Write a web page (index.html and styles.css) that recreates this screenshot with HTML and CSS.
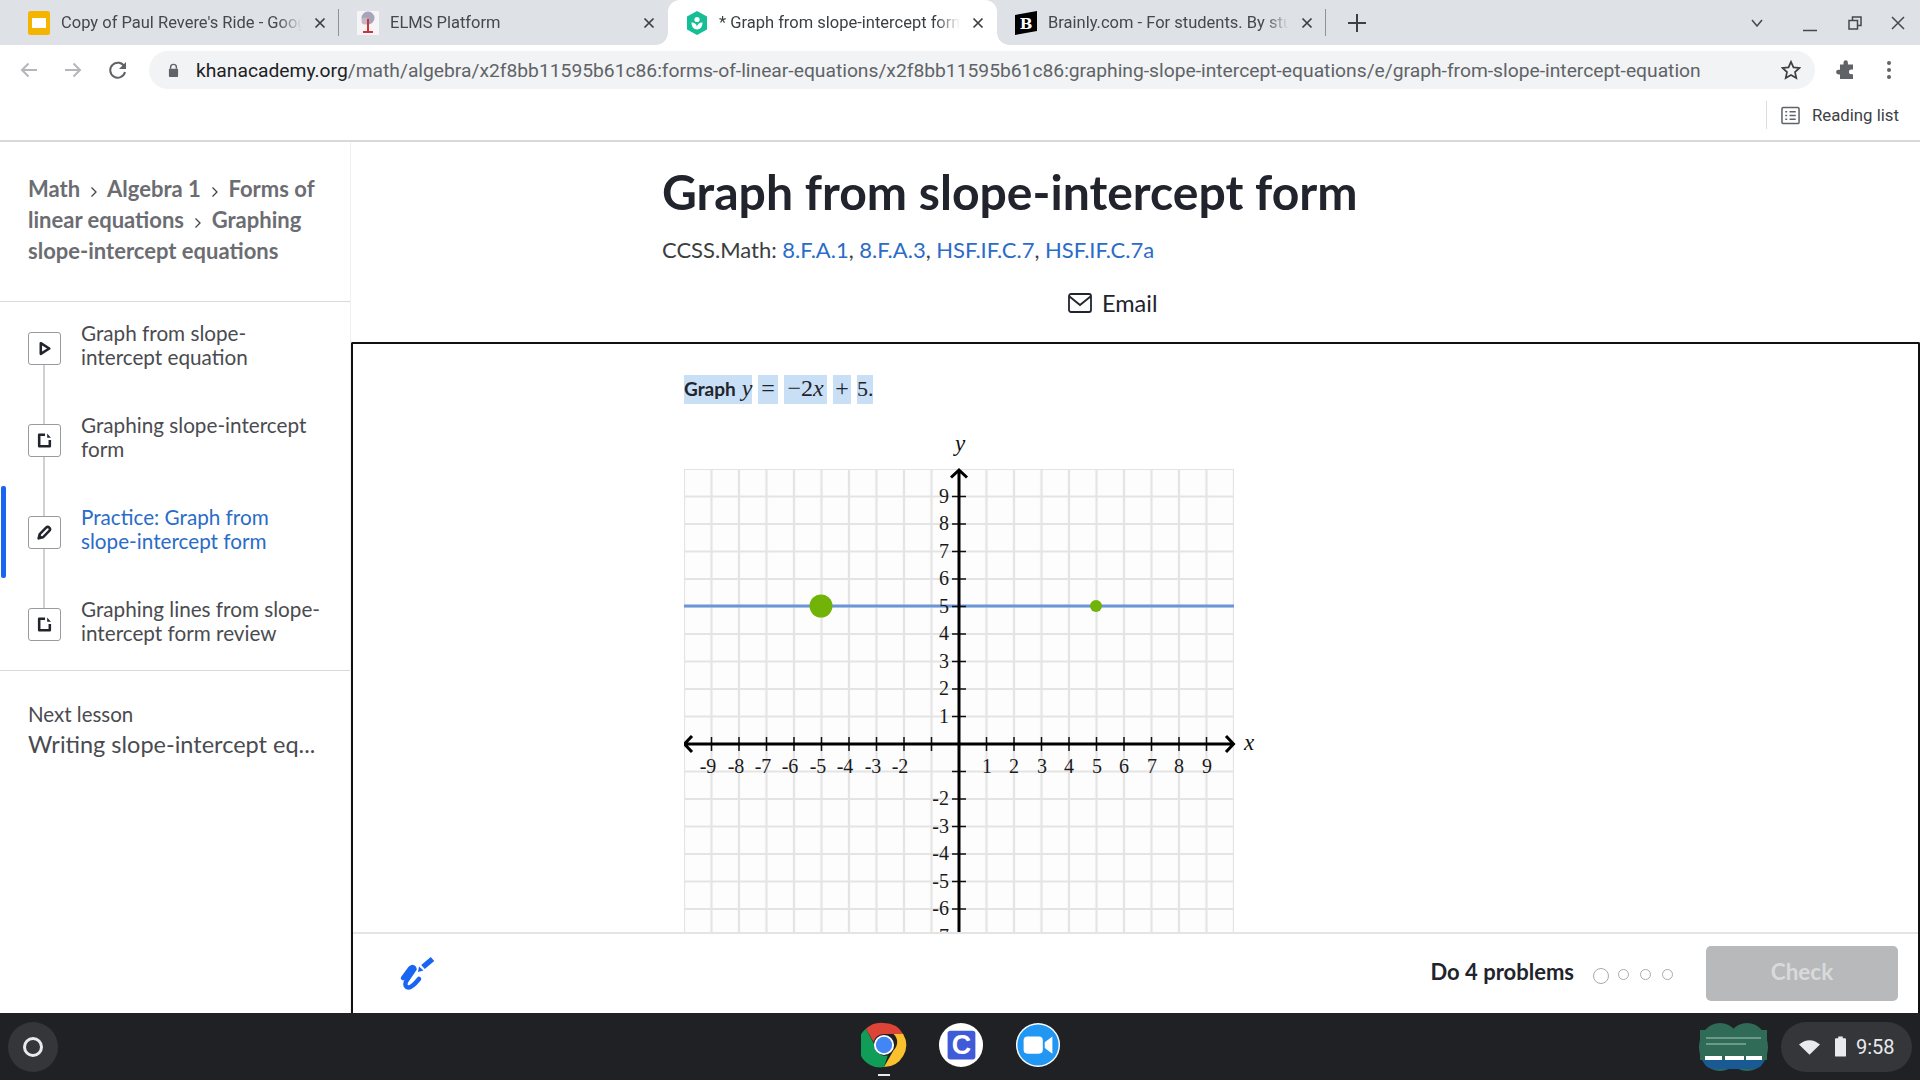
FILE: index.html
```html
<!DOCTYPE html>
<html lang="en">

<head>
	<meta charset="UTF-8">
	<title>Graph from slope-intercept form</title>
	<link rel="stylesheet" href="styles.css">
</head>

<body>
	<div class="window">

		<!-- browser tabs -->
		<div class="tabstrip">
			<div class="tab tab-sep">
				<svg class="favicon" viewBox="0 0 22 24"><rect x="0" y="0" width="22" height="24" rx="2.5" fill="#f4b400" /><rect x="4" y="7" width="14" height="10" fill="#fff" /></svg>
				<span class="tab-title">Copy of Paul Revere's Ride - Goog</span>
				<svg class="tab-close" viewBox="0 0 12 12"><path d="M1.5 1.5l9 9M10.5 1.5l-9 9" /></svg>
			</div>
			<div class="tab">
				<svg class="favicon" viewBox="0 0 22 24"><rect width="22" height="24" fill="#f6f4f6" /><circle cx="11" cy="7" r="6.500" fill="#a9a4bb" /><circle cx="8" cy="10" r="3.500" fill="#c3b9c4" /><path d="M11 8v12M6 21h10" stroke="#c9363a" stroke-width="2" /></svg>
				<span class="tab-title">ELMS Platform</span>
				<svg class="tab-close" viewBox="0 0 12 12"><path d="M1.5 1.5l9 9M10.5 1.5l-9 9" /></svg>
			</div>
			<div class="tab tab-active">
				<svg class="favicon" viewBox="0 0 22 24"><path d="M11 0l10 5.5v13L11 24 1 18.500v-13z" fill="#14bf96" /><circle cx="11" cy="8.500" r="2.600" fill="#fff" /><path d="M5.500 11.500c3 0 5.500 1.500 5.500 5 0-3.500 2.500-5 5.500-5 0 4-2 7-5.500 7s-5.500-3-5.500-7z" fill="#fff" /></svg>
				<span class="tab-title">* Graph from slope-intercept form</span>
				<svg class="tab-close" viewBox="0 0 12 12"><path d="M1.5 1.5l9 9M10.5 1.5l-9 9" /></svg>
			</div>
			<div class="tab tab-sep">
				<svg class="favicon" viewBox="0 0 22 24"><path d="M0 4L22 0v20L0 24z" fill="#000" /><text class="brainly-b" x="11" y="17.500" text-anchor="middle">B</text></svg>
				<span class="tab-title">Brainly.com - For students. By stu</span>
				<svg class="tab-close" viewBox="0 0 12 12"><path d="M1.5 1.5l9 9M10.5 1.5l-9 9" /></svg>
			</div>
			<svg class="new-tab" viewBox="0 0 18 18"><path d="M9 0v18M0 9h18" /></svg>
			<div class="window-btns">
				<svg viewBox="0 0 12 8" class="win-caret"><path d="M1 1l5 6 5-6" /></svg>
				<svg viewBox="0 0 14 14" class="win-min"><path d="M0 12.500h14" /></svg>
				<svg viewBox="0 0 14 14" class="win-max"><path d="M1 4.500h8.500V13H1zM4.500 4.500V1H13v8.500H9.500" /></svg>
				<svg viewBox="0 0 14 14" class="win-close"><path d="M1 1l12 12M13 1L1 13" /></svg>
			</div>
		</div>

		<!-- address bar -->
		<div class="toolbar">
			<svg class="nav-icon nav-back" viewBox="0 0 20 20"><path d="M18 10H3M9.500 3.500L3 10l6.500 6.500" /></svg>
			<svg class="nav-icon nav-forward" viewBox="0 0 20 20"><path d="M2 10h15M10.500 3.500L17 10l-6.500 6.500" /></svg>
			<svg class="nav-icon nav-reload" viewBox="0 0 20 20"><path d="M16.500 7A7.500 7.500 0 1 0 17 12" /><path class="solid" d="M18 2v7h-7z" /></svg>
			<div class="omnibox">
				<svg class="lock" viewBox="0 0 12 16"><path class="shackle" d="M2.800 6V4.500a3.200 3.200 0 0 1 6.400 0V6" /><rect x="1" y="6" width="10" height="9" rx="1" /></svg>
				<span class="url"><b>khanacademy.org</b>/math/algebra/x2f8bb11595b61c86:forms-of-linear-equations/x2f8bb11595b61c86:graphing-slope-intercept-equations/e/graph-from-slope-intercept-equation</span>
				<svg class="star" viewBox="0 0 20 20"><path d="M10 1.800l2.500 5.600 6 .6-4.500 4.100 1.300 6L10 15l-5.300 3.100 1.300-6L1.500 8l6-.6z" /></svg>
			</div>
			<svg class="puzzle" viewBox="0 0 20 20"><path d="M7.500 2.500a2.200 2.200 0 0 1 4.400 0V4.500H17v5h-1.700a2.400 2.400 0 0 0 0 4.800H17V19H4v-4.500H2.500a2.400 2.400 0 0 1 0-4.800H4V4.500h3.500z" /></svg>
			<svg class="dots" viewBox="0 0 4 18"><circle cx="2" cy="2" r="2" /><circle cx="2" cy="9" r="2" /><circle cx="2" cy="16" r="2" /></svg>
		</div>

		<div class="bookmarks">
			<div class="reading-list">
				<svg viewBox="0 0 20 20"><rect x="1" y="1.500" width="18" height="17" rx="1.500" /><path d="M4.500 6h2M4.500 10h2M4.500 14h2M9 6h6.500M9 10h6.500M9 14h6.500" /></svg>
				<span>Reading list</span>
			</div>
		</div>

		<!-- khan academy page -->
		<div class="page">
			<aside class="sidebar">
				<div class="crumbs">
					<a>Math</a> <svg class="crumb-arrow" viewBox="0 0 8 12"><path d="M1.500 1.500L6 6l-4.500 4.500" /></svg> <a>Algebra 1</a> <svg class="crumb-arrow" viewBox="0 0 8 12"><path d="M1.500 1.500L6 6l-4.500 4.500" /></svg> <a>Forms of</a> <a>linear equations</a> <svg class="crumb-arrow" viewBox="0 0 8 12"><path d="M1.500 1.500L6 6l-4.500 4.500" /></svg> <a>Graphing</a> <a>slope-intercept equations</a>
				</div>

				<ul class="lesson-list">
					<li class="lesson">
						<span class="lesson-icon"><svg viewBox="0 0 16 16"><path class="solid-line" d="M4.500 3l8 5-8 5z" /></svg></span>
						<span class="lesson-name">Graph from slope-<br>intercept equation</span>
					</li>
					<li class="lesson">
						<span class="lesson-icon"><svg viewBox="0 0 16 16"><path d="M8.500 2.500H3v11h10V7.500" /><path class="notch" d="M10.500 1.500l3.500 4h-3.500z" /></svg></span>
						<span class="lesson-name">Graphing slope-intercept<br>form</span>
					</li>
					<li class="lesson lesson-current">
						<span class="lesson-icon"><svg viewBox="0 0 16 16"><path d="M2.500 13.500l1-4L9.500 3.500a2 2 0 0 1 3 3L6.500 12.500z" /><path class="notch" d="M2 14l1-4.500 3.500 3.500z" /></svg></span>
						<span class="lesson-name">Practice: Graph from<br>slope-intercept form</span>
					</li>
					<li class="lesson">
						<span class="lesson-icon"><svg viewBox="0 0 16 16"><path d="M8.500 2.500H3v11h10V7.500" /><path class="notch" d="M10.500 1.500l3.500 4h-3.500z" /></svg></span>
						<span class="lesson-name">Graphing lines from slope-<br>intercept form review</span>
					</li>
				</ul>

				<div class="next-lesson">
					<div class="next-label">Next lesson</div>
					<div class="next-name">Writing slope-intercept eq...</div>
				</div>
			</aside>

			<main class="content">
				<header class="content-head">
					<h1>Graph from slope-intercept form</h1>
					<p class="ccss">CCSS.Math: <a>8.F.A.1</a>, <a>8.F.A.3</a>, <a>HSF.IF.C.7</a>, <a>HSF.IF.C.7a</a></p>
					<div class="email">
						<svg viewBox="0 0 24 20"><rect x="1" y="1" width="22" height="18" rx="2" /><path d="M1.500 3.500L12 12l10.500-8.500" /></svg>
						<span>Email</span>
					</div>
				</header>

				<section class="exercise">
					<div class="problem">
						<div class="prompt">
							<span class="sel sel-word"><b>Graph</b> <i>y</i></span>
							<span class="sel sel-eq">=</span>
							<span class="sel sel-num">−2<i>x</i></span>
							<span class="sel sel-plus">+</span>
							<span class="sel sel-five">5.</span>
						</div>
						<svg class="graph" width="590" height="600" viewBox="0 0 590 600">
							<defs>
								<pattern id="grid" x="-13.75" y="25.25" width="27.5" height="27.5" patternUnits="userSpaceOnUse">
									<rect width="27.5" height="27.5" fill="#fdfdfd" />
									<path d="M13.750 0V27.500M0 13.750H27.500" fill="none" stroke="#e4e4e4" stroke-width="2.200" />
								</pattern>
							</defs>
							<rect x="0" y="39" width="550" height="550" fill="url(#grid)" />
							<path class="line" d="M0 176H550" />
							<path class="ticks" d="M27.500 307v14M55 307v14M82.500 307v14M110 307v14M137.500 307v14M165 307v14M192.500 307v14M220 307v14M247.500 307v14M302.500 307v14M330 307v14M357.500 307v14M385 307v14M412.500 307v14M440 307v14M467.500 307v14M495 307v14M522.500 307v14M268 66.500h14M268 94h14M268 121.500h14M268 149h14M268 176.500h14M268 204h14M268 231.500h14M268 259h14M268 286.500h14M268 341.500h14M268 369h14M268 396.500h14M268 424h14M268 451.500h14M268 479h14M268 506.500h14" />
							<path class="axis" d="M275 40V600M1 314H549M8 306L0.500 314L8 322M542 306L549.500 314L542 322M267 47.500L275 40L283 47.500" />
							<circle cx="137" cy="176" r="11.500" fill="#71b307" />
							<circle cx="412" cy="176" r="6" fill="#71b307" />
							<g class="tick-labels" text-anchor="middle">
								<text x="24" y="343">-9</text><text x="52" y="343">-8</text><text x="79" y="343">-7</text><text x="106" y="343">-6</text><text x="134" y="343">-5</text><text x="161" y="343">-4</text><text x="189" y="343">-3</text><text x="216" y="343">-2</text>
								<text x="303" y="343">1</text><text x="330" y="343">2</text><text x="358" y="343">3</text><text x="385" y="343">4</text><text x="413" y="343">5</text><text x="440" y="343">6</text><text x="468" y="343">7</text><text x="495" y="343">8</text><text x="523" y="343">9</text>
							</g>
							<g class="tick-labels" text-anchor="end">
								<text x="265" y="73">9</text><text x="265" y="100">8</text><text x="265" y="128">7</text><text x="265" y="155">6</text><text x="265" y="183">5</text><text x="265" y="210">4</text><text x="265" y="238">3</text><text x="265" y="265">2</text><text x="265" y="293">1</text>
								<text x="265" y="375">-2</text><text x="265" y="403">-3</text><text x="265" y="430">-4</text><text x="265" y="458">-5</text><text x="265" y="485">-6</text><text x="265" y="513">-7</text>
							</g>
							<text class="axis-label" x="560" y="320">x</text>
							<text class="axis-label" x="271" y="21">y</text>
						</svg>
					</div>

					<footer class="exercise-foot">
						<svg class="scratch" viewBox="0 0 36 36"><path class="scribble" d="M4 22L11 12.500Q14.500 9.500 15.500 13L7 25.500Q5 31 9.500 31.500Q13 31.500 20 23" /><path class="pencil" d="M24 11L33.500 3" /><path class="pencil-tip" d="M19 16l1-5.500 4.500 4z" /></svg>
						<span class="goal">Do 4 problems</span>
						<div class="dots-progress">
							<span class="dot dot-first"></span><span class="dot"></span><span class="dot"></span><span class="dot"></span>
						</div>
						<button class="check" disabled>Check</button>
					</footer>
				</section>
			</main>
		</div>

		<!-- chrome os shelf -->
		<div class="shelf">
			<div class="launcher"><span class="launcher-ring"></span></div>
			<div class="shelf-apps">
				<div class="shelf-app app-active">
					<svg viewBox="0 0 48 48">
						<path d="M24 1a23 23 0 0 1 20 11.500H24a11.500 11.500 0 0 0-11 8L5 7A23 23 0 0 1 24 1z" fill="#db4437" />
						<path d="M44 12.500A23 23 0 0 1 24 47l10-17.500a11.500 11.500 0 0 0 0-17z" fill="#fbc02d" />
						<path d="M24 47A23 23 0 0 1 5 7l9 16.500a11.500 11.500 0 0 0 14 11.500L24 47z" fill="#0f9d58" />
						<circle cx="24" cy="24" r="10.500" fill="#fff" /><circle cx="24" cy="24" r="8.500" fill="#4285f4" />
					</svg>
				</div>
				<div class="shelf-app">
					<svg viewBox="0 0 48 48"><circle cx="24" cy="24" r="23" fill="#fff" /><rect x="10" y="9" width="29" height="30" rx="3" fill="#3f5bd8" /><text class="clever-c" x="24.500" y="33" text-anchor="middle">C</text></svg>
				</div>
				<div class="shelf-app">
					<svg viewBox="0 0 48 48"><circle cx="24" cy="24" r="23" fill="#fff" /><circle cx="24" cy="24" r="21.500" fill="#2196f3" /><rect x="9" y="15" width="20" height="18" rx="4" fill="#fff" /><path d="M31 21l8-6v18l-8-6z" fill="#fff" /></svg>
				</div>
			</div>
			<div class="shelf-tray">
				<svg class="holding" viewBox="0 0 71 50">
					<ellipse cx="22" cy="25" rx="21" ry="24" fill="#2f6b57" />
					<ellipse cx="49" cy="25" rx="21" ry="24" fill="#2f6b57" />
					<rect x="2" y="8" width="67" height="30" fill="#2f6b57" />
					<path d="M4 38h63l-4 6Q58 48 49 47H22Q13 48 8 44z" fill="#1a5a94" />
					<path d="M8 16h55M8 22h40" stroke="#a9c7ba" stroke-width="1" />
					<rect x="7" y="34" width="17" height="4" fill="#fff" /><rect x="27" y="34" width="19" height="4" fill="#fff" /><rect x="48" y="34" width="16" height="4" fill="#fff" />
				</svg>
				<div class="status">
					<svg class="wifi" viewBox="0 0 22 16"><path d="M0 5.500Q11-3.500 22 5.500L11 16z" /></svg>
					<svg class="battery" viewBox="0 0 12 22"><path d="M3.500 0h5v2H11a1 1 0 0 1 1 1v18a1 1 0 0 1-1 1H1a1 1 0 0 1-1-1V3a1 1 0 0 1 1-1h2.500z" /></svg>
					<span class="clock">9:58</span>
				</div>
			</div>
		</div>

	</div>
</body>

</html>
```

FILE: styles.css
```css
* {
	box-sizing: border-box;
}

html,
body {
	margin: 0;
	height: 100%;
	overflow: hidden;
	background-color: #fff;
}

.window {
	width: 1920px;
	height: 1080px;
	display: flex;
	flex-direction: column;
	font-family: "Roboto", sans-serif;
}

/* tabs */

.tabstrip {
	height: 45px;
	flex: none;
	display: flex;
	align-items: stretch;
	padding-left: 10px;
	background-color: #dee1e6;
}

.tab {
	width: 329px;
	display: flex;
	align-items: center;
	position: relative;
	padding-left: 18px;
	color: #45484d;
	font-size: 16.500px;
}

.tab-sep::after {
	content: "";
	position: absolute;
	right: 0;
	top: 9px;
	bottom: 9px;
	width: 1px;
	background-color: #8f9297;
}

.tab-active {
	background-color: #fff;
	border-radius: 12px 12px 0 0;
	color: #3c4043;
}

.tab-active::before,
.tab-active::after {
	content: "";
	position: absolute;
	bottom: 0;
	width: 12px;
	height: 12px;
	background: radial-gradient(circle at 0 0, transparent 11.5px, #fff 12px);
}

.tab-active::before {
	left: -12px;
}

.tab-active::after {
	right: -12px;
	background: radial-gradient(circle at 100% 0, transparent 11.5px, #fff 12px);
}

.favicon {
	width: 22px;
	height: 24px;
	flex: none;
}

.brainly-b {
	font-family: "DejaVu Serif", serif;
	font-weight: bold;
	font-size: 15px;
	fill: #fff;
}

.tab-title {
	width: 241px;
	margin-left: 11px;
	white-space: nowrap;
	overflow: hidden;
	-webkit-mask-image: linear-gradient(to right, #000 90%, transparent);
	mask-image: linear-gradient(to right, #000 90%, transparent);
}

.tab-close {
	width: 12px;
	height: 12px;
	margin-left: 12px;
	fill: none;
	stroke: #3c4043;
	stroke-width: 1.7;
}

.new-tab {
	width: 18px;
	height: 18px;
	align-self: center;
	margin-left: 22px;
	fill: none;
	stroke: #3c4043;
	stroke-width: 2;
}

.window-btns {
	margin-left: auto;
	display: flex;
	align-items: center;
	padding-right: 15px;
	fill: none;
	stroke: #45484d;
	stroke-width: 1.5;
}

.window-btns svg {
	width: 14px;
	height: 14px;
}

.win-caret {
	height: 8px !important;
}

.win-min {
	margin-left: 39px;
	margin-top: 4px;
}

.win-max {
	margin-left: 31px;
}

.win-close {
	margin-left: 29px;
}

/* address bar */

.toolbar {
	height: 52px;
	flex: none;
	display: flex;
	align-items: flex-start;
	padding: 6px 0 0 19px;
}

.nav-icon {
	width: 20px;
	height: 20px;
	margin-top: 9px;
	margin-right: 24px;
	fill: none;
	stroke: #b4b6b9;
	stroke-width: 2;
}

.nav-forward {
	margin-right: 25px;
}

.nav-reload {
	stroke: #5f6368;
	margin-right: 21px;
}

.nav-reload .solid {
	fill: #5f6368;
	stroke: none;
}

.omnibox {
	width: 1666px;
	height: 38px;
	display: flex;
	align-items: center;
	padding: 0 14px 0 19px;
	border-radius: 19px;
	background-color: #f1f3f4;
}

.lock {
	width: 11px;
	height: 15px;
	flex: none;
	fill: #5f6368;
}

.shackle {
	fill: none;
	stroke: #5f6368;
	stroke-width: 1.6;
}

.url {
	margin-left: 17px;
	flex: 1;
	white-space: nowrap;
	overflow: hidden;
	font-size: 19.250px;
	color: #5f6368;
}

.url b {
	font-weight: 400;
	color: #202124;
}

.star {
	width: 20px;
	height: 20px;
	flex: none;
	fill: none;
	stroke: #3c4043;
	stroke-width: 1.7;
}

.puzzle {
	width: 20px;
	height: 20px;
	margin: 9px 0 0 21px;
	fill: #5f6368;
}

.dots {
	width: 4px;
	height: 18px;
	margin: 10px 0 0 31px;
	fill: #5f6368;
}

.bookmarks {
	height: 45px;
	flex: none;
	display: flex;
	justify-content: flex-end;
	border-bottom: 2px solid #d9d9d9;
}

.reading-list {
	height: 28px;
	margin-top: 4px;
	display: flex;
	align-items: center;
	gap: 12px;
	padding: 0 21px 0 14px;
	border-left: 1px solid #dadce0;
	font-size: 16.800px;
	color: #3c4043;
}

.reading-list svg {
	width: 19px;
	height: 19px;
	fill: none;
	stroke: #5f6368;
	stroke-width: 1.6;
}

/* page */

.page {
	flex: 1;
	min-height: 0;
	display: flex;
	font-family: "Lato", sans-serif;
}

.sidebar {
	width: 351px;
	flex: none;
	display: flex;
	flex-direction: column;
	border-right: 1px solid #f0f0f0;
}

.crumbs {
	height: 160px;
	padding: 31px 30px 0 28px;
	border-bottom: 1px solid #d9d9d9;
	font-size: 22px;
	font-weight: 700;
	line-height: 31px;
	color: #6b6d72;
}

.crumb-arrow {
	width: 8px;
	height: 12px;
	margin: 0 4.500px -1px;
	fill: none;
	stroke: #44464b;
	stroke-width: 1.3;
}

.lesson-list {
	list-style: none;
	margin: 0;
	padding: 0;
	height: 369px;
	border-bottom: 1px solid #d9d9d9;
}

.lesson {
	height: 92px;
	display: flex;
	align-items: center;
	gap: 20px;
	padding-left: 28px;
	position: relative;
	font-size: 20.700px;
	line-height: 24px;
	color: #4a4b50;
}

/* connector between the lesson boxes */
.lesson::before {
	content: "";
	position: absolute;
	left: 43px;
	top: 50%;
	height: 92px;
	width: 2px;
	background-color: #d0d0d0;
}

.lesson:last-child::before {
	display: none;
}

.lesson-icon {
	width: 33px;
	height: 33px;
	flex: none;
	display: flex;
	align-items: center;
	justify-content: center;
	position: relative;
	z-index: 1;
	background-color: #fff;
	border: 1.5px solid #9a9b9e;
	border-radius: 3px;
}

.lesson-icon svg {
	width: 17px;
	height: 17px;
	fill: none;
	stroke: #21242c;
	stroke-width: 2.400;
	stroke-linejoin: round;
}

.lesson-icon .notch {
	fill: #21242c;
	stroke: none;
}

.lesson-name {
	padding-bottom: 6px;
	white-space: nowrap;
}

.lesson-current {
	color: #2a6cc8;
}

.lesson-current::after {
	content: "";
	position: absolute;
	left: 1px;
	top: 0;
	width: 5px;
	height: 92px;
	background-color: #1865f2;
	border-radius: 2px;
}

.next-lesson {
	padding: 30px 20px 0 28px;
	color: #4a4b50;
}

.next-label {
	font-size: 20.500px;
	line-height: 26px;
}

.next-name {
	margin-top: 2px;
	font-size: 23.500px;
	line-height: 30px;
}

/* main column */

.content {
	flex: 1;
	min-width: 0;
	display: flex;
	flex-direction: column;
}

.content-head {
	height: 200px;
	flex: none;
	padding: 21px 0 0 311px;
	color: #21242c;
}

.content-head h1 {
	margin: 0;
	font-size: 48.100px;
	font-weight: 700;
	line-height: 58px;
}

.ccss {
	margin: 14px 0 0;
	font-size: 22px;
	line-height: 30px;
	color: #3b3e40;
}

.ccss a {
	color: #2a6cc8;
}

.email {
	margin: 23px 0 0 406px;
	display: flex;
	align-items: center;
	gap: 10px;
	font-size: 23.500px;
	line-height: 30px;
}

.email svg {
	width: 24px;
	height: 20px;
	fill: none;
	stroke: #21242c;
	stroke-width: 1.8;
}

.exercise {
	flex: 1;
	min-height: 0;
	display: flex;
	flex-direction: column;
	border: 2px solid #111;
	border-bottom: none;
	border-radius: 2px 2px 0 0;
}

.problem {
	flex: 1;
	min-height: 0;
	overflow: hidden;
	padding: 31px 0 0 331px;
}

.prompt {
	height: 29px;
	display: flex;
	gap: 6px;
	color: #21242c;
	font-family: "Liberation Serif", serif;
	font-size: 24px;
	line-height: 27px;
}

.prompt b {
	font-family: "Lato", sans-serif;
	font-size: 19px;
	font-weight: 700;
}

.sel {
	background-color: #c8dff5;
	white-space: pre;
	text-align: center;
}

.sel-word {
	width: 68px;
	text-align: left;
}

.sel-eq {
	width: 20px;
}

.sel-num {
	width: 43px;
}

.sel-plus {
	width: 18px;
}

.sel-five {
	width: 16px;
	font-size: 22px;
}

.graph {
	display: block;
	margin-top: 26px;
}

.line {
	stroke: #6a96d8;
	stroke-width: 3;
}

.ticks {
	stroke: #111;
	stroke-width: 1.5;
}

.axis {
	fill: none;
	stroke: #000;
	stroke-width: 3;
}

.tick-labels {
	font-family: "Liberation Serif", serif;
	font-size: 20px;
	fill: #1a1a1a;
}

.axis-label {
	font-family: "Liberation Serif", serif;
	font-style: italic;
	font-size: 23px;
	fill: #111;
}

.exercise-foot {
	height: 81px;
	flex: none;
	display: flex;
	align-items: center;
	padding: 0 20px 0 46px;
	border-top: 2px solid #e4e4e4;
}

.scratch {
	width: 36px;
	height: 36px;
	fill: none;
	stroke: #1865f2;
	stroke-linecap: round;
	stroke-linejoin: round;
}

.scribble {
	stroke-width: 4.500;
}

.pencil {
	stroke-width: 5.500;
	stroke-linecap: butt;
}

.pencil-tip {
	fill: #1865f2;
	stroke: none;
}

.goal {
	margin-left: auto;
	padding-bottom: 4px;
	font-size: 22px;
	font-weight: 700;
	color: #21242c;
}

.dots-progress {
	display: flex;
	align-items: center;
	gap: 11px;
	margin: 2px 33px 0 19px;
}

.dot {
	width: 11px;
	height: 11px;
	border: 1.5px solid #a9aaac;
	border-radius: 50%;
}

.dot-first {
	width: 16px;
	height: 16px;
	margin-top: 2px;
	margin-right: -2px;
}

.check {
	width: 192px;
	height: 55px;
	padding: 0 0 4px;
	border: none;
	border-radius: 5px;
	background-color: #b8b9bb;
	color: #d9dadb;
	font-family: "Lato", sans-serif;
	font-size: 22.500px;
	font-weight: 700;
}

/* shelf */

.shelf {
	height: 67px;
	flex: none;
	display: flex;
	align-items: center;
	position: relative;
	background-color: #202124;
}

.launcher {
	width: 50px;
	height: 50px;
	margin-left: 8px;
	display: flex;
	align-items: center;
	justify-content: center;
	border-radius: 50%;
	background-color: #35363a;
}

.launcher-ring {
	width: 20px;
	height: 20px;
	border: 3px solid #e8eaed;
	border-radius: 50%;
}

/* centred on the screen, not in the row */
.shelf-apps {
	position: absolute;
	left: 861px;
	top: 9px;
	display: flex;
	gap: 31px;
}

.shelf-app {
	width: 46px;
	height: 46px;
	position: relative;
}

.shelf-app svg {
	display: block;
	width: 46px;
	height: 46px;
}

.app-active::after {
	content: "";
	position: absolute;
	left: 17px;
	top: 52px;
	width: 12px;
	height: 2px;
	background-color: #e8eaed;
}

.clever-c {
	font-family: "Liberation Sans", sans-serif;
	font-weight: bold;
	font-size: 28px;
	fill: #fff;
}

.shelf-tray {
	margin-left: auto;
	display: flex;
	align-items: center;
	gap: 12px;
	padding-right: 8px;
}

.holding {
	width: 71px;
	height: 50px;
}

.status {
	width: 131px;
	height: 50px;
	display: flex;
	align-items: center;
	padding-left: 18px;
	border-radius: 25px;
	background-color: #35363a;
	color: #e8eaed;
	fill: #e8eaed;
}

.wifi {
	width: 21px;
	height: 16px;
}

.battery {
	width: 11px;
	height: 21px;
	margin-left: 15px;
}

.clock {
	margin-left: 10px;
	font-size: 20px;
}
```
